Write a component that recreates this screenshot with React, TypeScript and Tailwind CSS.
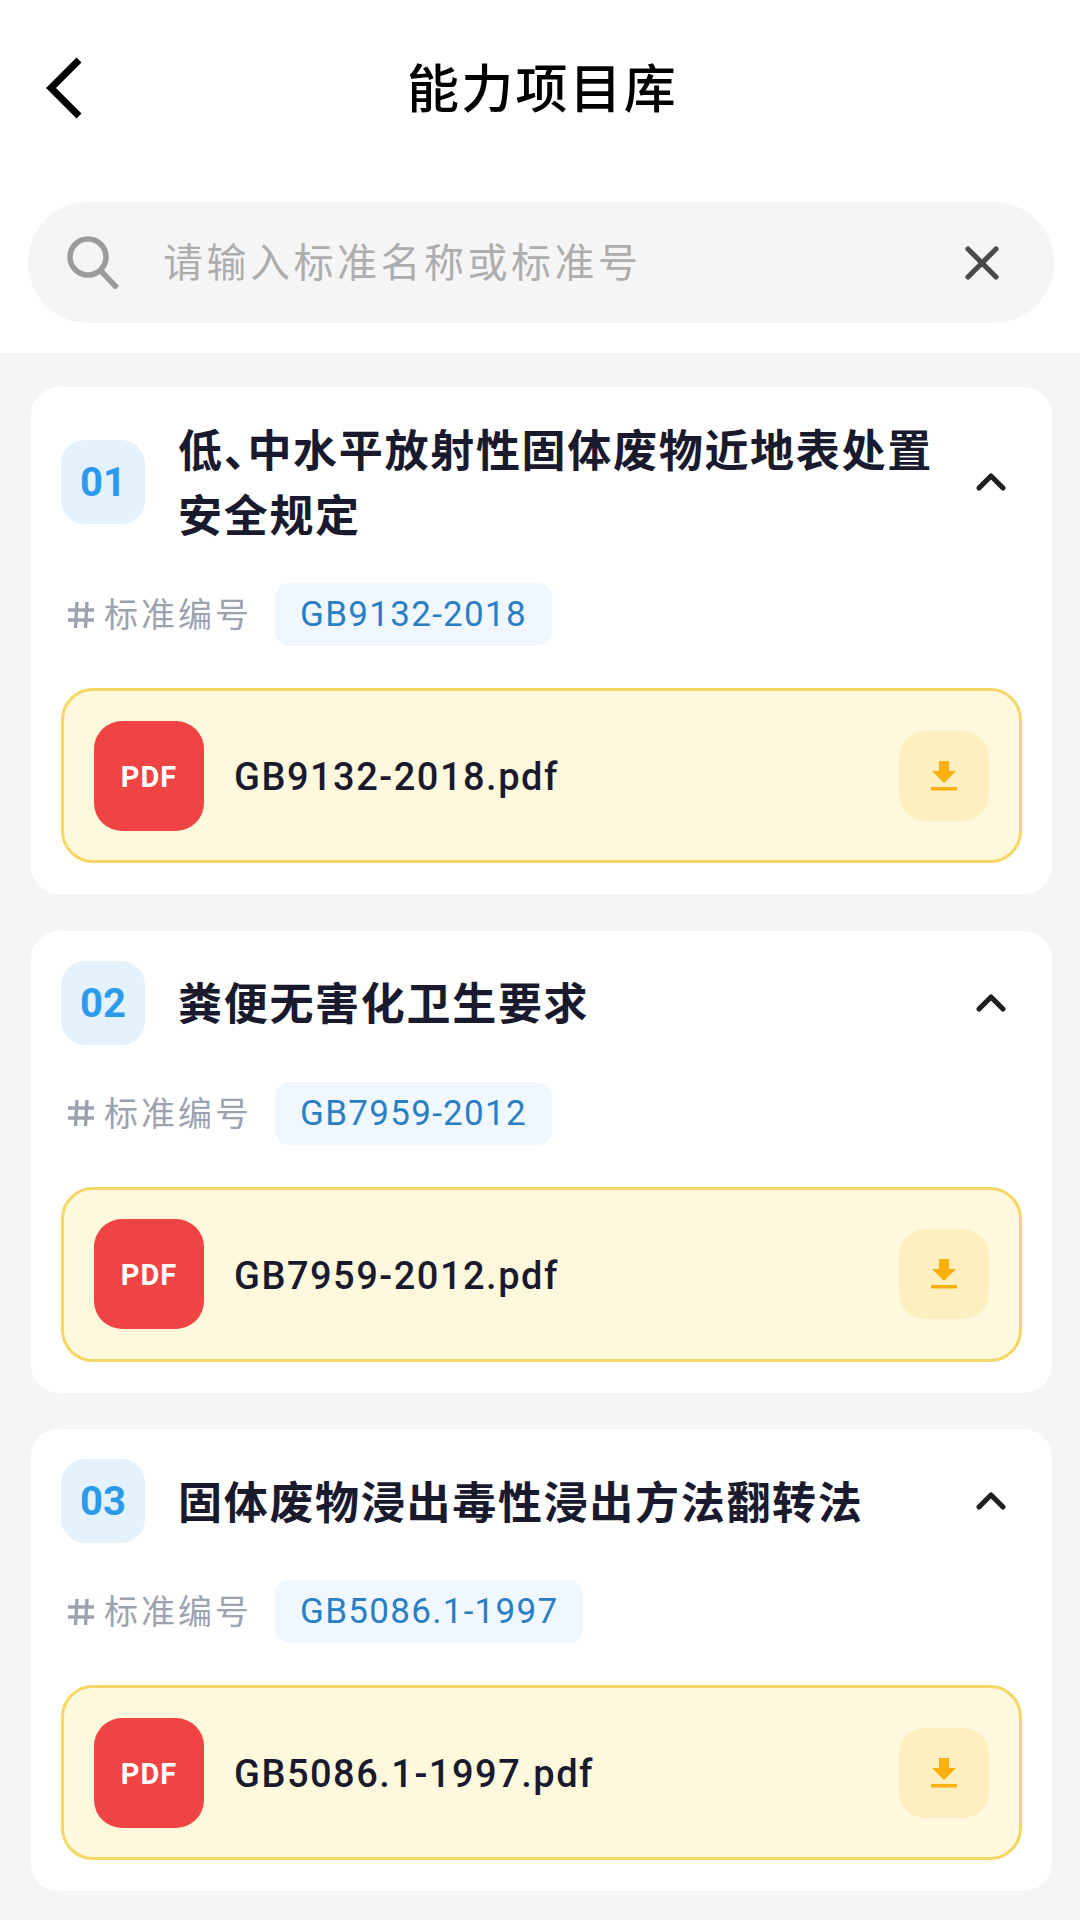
import { ChevronUp, X } from "lucide-react";

const items = [
  {
    no: "01",
    title: "低、中水平放射性固体废物近地表处置安全规定",
    code: "GB9132-2018",
  },
  {
    no: "02",
    title: "粪便无害化卫生要求",
    code: "GB7959-2012",
  },
  {
    no: "03",
    title: "固体废物浸出毒性浸出方法翻转法",
    code: "GB5086.1-1997",
  },
];

function DownloadIcon() {
  return (
    <svg width="28" height="32" viewBox="0 0 28 32" fill="#fbb00f">
      <path d="M9 1h10v10h7L14 23 2 11h7z" />
      <rect x="1" y="27" width="26" height="3.5" />
    </svg>
  );
}

function HashIcon() {
  return (
    <svg className="ml-[6px] shrink-0" width="28" height="28" viewBox="0 0 28 28" fill="none" stroke="#9ca3af" strokeWidth="3.4">
      <path d="M1 9h26M1 19h26M10 1 8.5 27M20 1l-1.500 26" />
    </svg>
  );
}

function SearchIcon() {
  return (
    <svg className="shrink-0" width="52" height="53" viewBox="0 0 52 53" fill="none" stroke="#9b9b9b">
      <circle cx="21" cy="21" r="18" strokeWidth="5.5" />
      <path d="M34 35l16 17" strokeWidth="5.5" />
    </svg>
  );
}

export default function App() {
  return (
    <div className="w-[1080px] h-[1920px] overflow-hidden bg-[#f5f5f5] font-['Roboto','Noto_Sans_CJK_SC',sans-serif]">
      {/* Header */}
      <div className="bg-white h-[353px] pl-[28px] pr-[26px]">
        <div className="relative h-[202px] flex justify-center pt-[59px]">
          <svg
            className="absolute left-[17px] top-[57px]"
            width="38"
            height="62"
            viewBox="0 0 38 62"
            fill="none"
            stroke="#000"
            strokeWidth="7"
          >
            <path d="M34 3 6 31l28 28" />
          </svg>
          <h1 className="text-[52px] leading-[64px] font-medium text-black tracking-[2.2px] ml-[3px]">能力项目库</h1>
        </div>
        <div className="h-[121px] rounded-[60px] bg-[#f5f5f5] flex items-center pl-[39px] pr-[44px]">
          <SearchIcon />
          <span className="ml-[44px] pt-[3px] flex-1 text-[40px] tracking-[3.5px] text-[#adadad]">请输入标准名称或标准号</span>
          <X className="w-[56px] h-[56px] text-[#4a4a4a]" strokeWidth={2.2} />
        </div>
      </div>

      {/* Cards */}
      <div className="pt-[34px] pl-[31px] pr-[28px] flex flex-col gap-[36.5px]">
        {items.map((item) => (
          <div key={item.no} className="bg-white rounded-[28px] pt-[30px] px-[30px] pb-[31px]">
            <div className="flex items-center">
              <div className="w-[84px] h-[84px] pt-[2px] rounded-[24px] bg-[#e3f2fd] flex items-center justify-center shrink-0 text-[40px] font-bold text-[#2c9aea]">
                {item.no}
              </div>
              <div className="ml-[33px] flex-1 translate-y-[3px] text-[44px] leading-[64.5px] font-bold tracking-[1.7px] text-[#1a1a2e] [font-feature-settings:'halt']">
                {item.title}
              </div>
              <ChevronUp className="w-[48px] h-[48px] ml-[14px] mr-[7px] text-[#1f1f1f] shrink-0" strokeWidth={2.6} />
            </div>

            <div className="mt-[37px] flex items-center h-[63px]">
              <HashIcon />
              <span className="ml-[9px] pt-[2px] text-[34px] tracking-[3px] text-[#9ca3af]">标准编号</span>
              <span className="ml-[23px] h-[63px] px-[25px] pt-[2px] rounded-[14px] bg-[#f0f7ff] flex items-center text-[35px] tracking-[1.3px] text-[#2a7fc4]">
                {item.code}
              </span>
            </div>

            <div className="mt-[42px] h-[175px] rounded-[32px] border-[3px] border-[#f5d766] bg-[#fef8dd] flex items-center pl-[30px] pr-[30px]">
              <div className="w-[110px] h-[110px] pt-[4px] rounded-[28px] bg-[#ef4444] flex items-center justify-center text-[29px] tracking-[1px] font-bold text-white shrink-0">
                PDF
              </div>
              <span className="ml-[30px] pt-[4px] flex-1 text-[38px] font-medium tracking-[1.5px] text-[#1a1a2e]">
                {item.code}.pdf
              </span>
              <div className="w-[90px] h-[90px] rounded-[26px] bg-[#fdefc0] flex items-center justify-center shrink-0">
                <DownloadIcon />
              </div>
            </div>
          </div>
        ))}
      </div>
    </div>
  );
}
